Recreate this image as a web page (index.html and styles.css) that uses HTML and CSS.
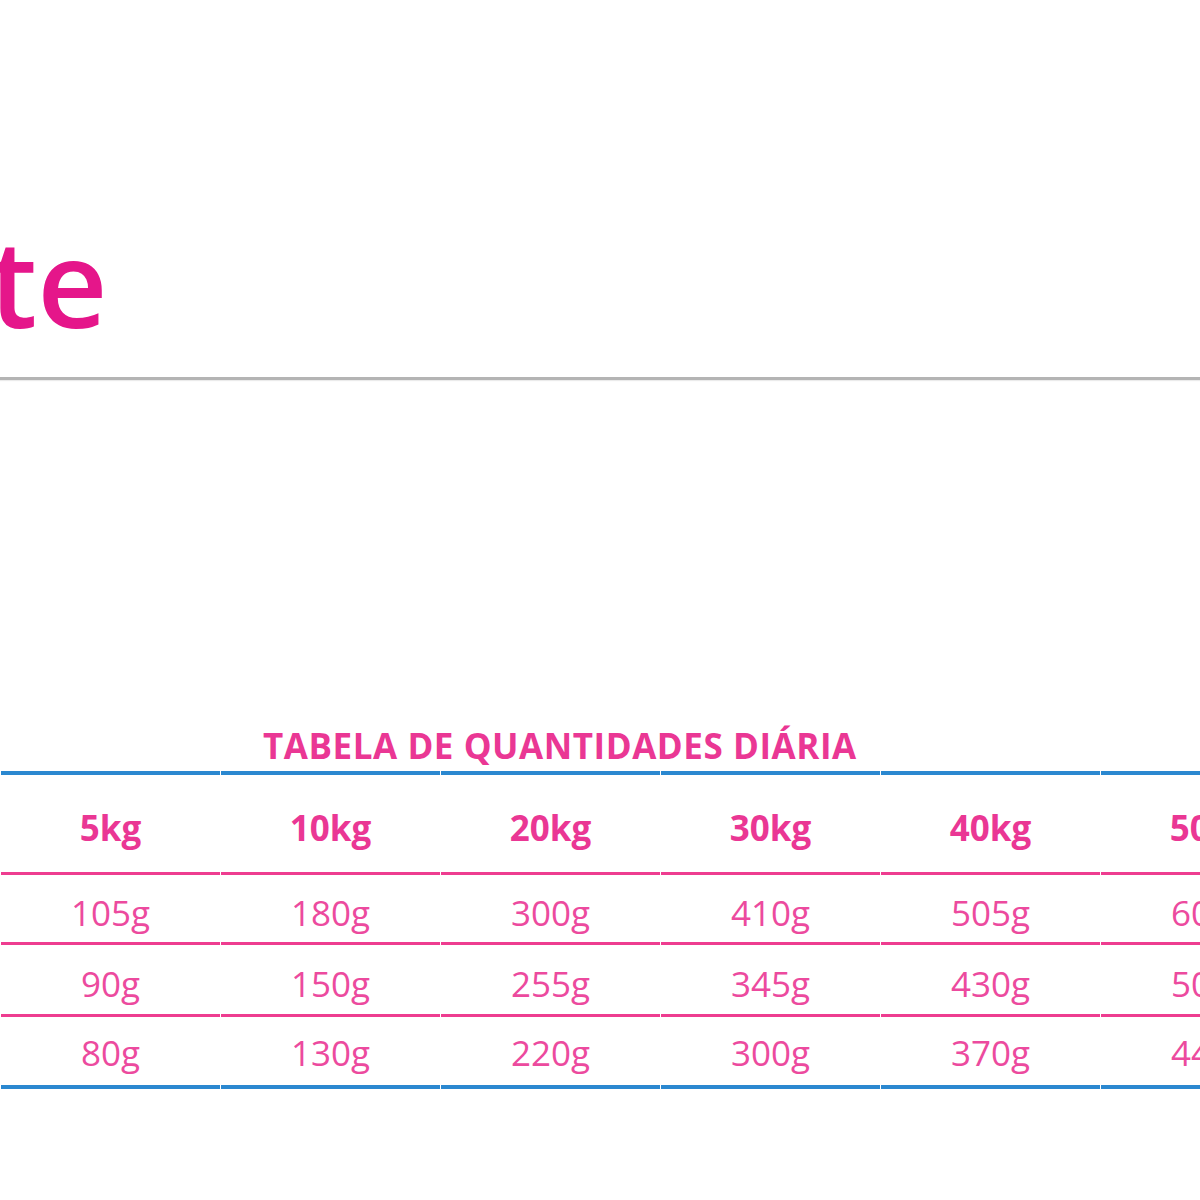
FILE: index.html
```html
<!DOCTYPE html>
<html lang="pt">
<head>
<meta charset="utf-8">
<title>Tabela de quantidades diária</title>
<link rel="stylesheet" href="styles.css">
</head>
<body>
<header class="hero">
  <h1 class="hero-title">te</h1>
</header>
<section class="feeding">
  <h2 class="feeding-title">TABELA DE QUANTIDADES DIÁRIA</h2>
  <div class="feeding-table">
    <div class="row row-head">
      <div class="cell">5kg</div>
      <div class="cell">10kg</div>
      <div class="cell">20kg</div>
      <div class="cell">30kg</div>
      <div class="cell">40kg</div>
      <div class="cell">50kg</div>
    </div>
    <div class="row row-1">
      <div class="cell">105g</div>
      <div class="cell">180g</div>
      <div class="cell">300g</div>
      <div class="cell">410g</div>
      <div class="cell">505g</div>
      <div class="cell">600g</div>
    </div>
    <div class="row row-2">
      <div class="cell">90g</div>
      <div class="cell">150g</div>
      <div class="cell">255g</div>
      <div class="cell">345g</div>
      <div class="cell">430g</div>
      <div class="cell">505g</div>
    </div>
    <div class="row row-3 row-last">
      <div class="cell">80g</div>
      <div class="cell">130g</div>
      <div class="cell">220g</div>
      <div class="cell">300g</div>
      <div class="cell">370g</div>
      <div class="cell">440g</div>
    </div>
  </div>
</section>
</body>
</html>
```

FILE: styles.css
```css
html, body {
  margin: 0;
  padding: 0;
  background: #ffffff;
  overflow: hidden;
}

body {
  width: 1200px;
  height: 1200px;
  font-family: "Open Sans", "Noto Sans", sans-serif;
}

.hero {
  padding-top: 220px;
  border-bottom: 3px solid #b4b4b4;
  box-shadow: 0 1px 1px rgba(0, 0, 0, 0.08);
}

.hero-title {
  margin: 0 0 34px -11px;
  font-size: 122px;
  line-height: 123px;
  font-weight: 600;
  color: #e5168a;
}

.feeding {
  padding-top: 346px;
}

.feeding-title {
  margin: 0 0 5px 263px;
  font-size: 35px;
  line-height: 40px;
  font-weight: 700;
  letter-spacing: 0.55px;
  color: #ea3794;
  white-space: nowrap;
}

.feeding-table {
  width: 1320px;
  color: #ec4a9e;
}

.row {
  display: grid;
  grid-template-columns: repeat(6, 219px);
  column-gap: 1px;
  margin-left: 1px;
}

.cell {
  text-align: center;
  font-size: 35px;
  line-height: 40px;
  border-bottom: 3px solid #ee3d90;
}

.row-head .cell {
  font-weight: 700;
  color: #ea3794;
  border-top: 4px solid #2b88d0;
  padding: 33px 0 24px;
}

.row-1 .cell {
  padding: 18px 0 9px;
}

.row-2 .cell {
  padding: 19px 0 10px;
}

.row-3 .cell {
  padding: 16px 0 12px;
}

.row-last .cell {
  border-bottom: 4px solid #2b88d0;
}
```
